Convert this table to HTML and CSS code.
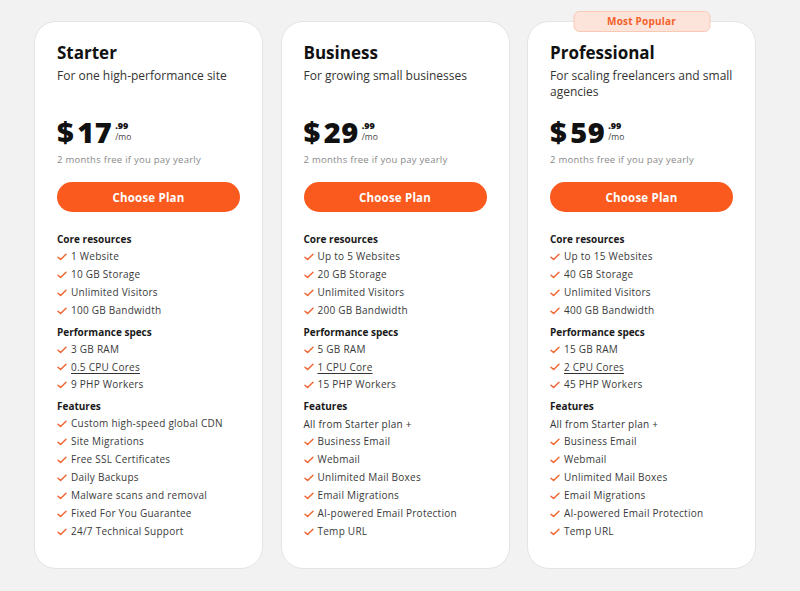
FILE: index.html
```html
<!DOCTYPE html>
<html>
<head>
<meta charset="utf-8">
<link rel="stylesheet" href="styles.css">
</head>
<body>
<div class="plans">
  <div class="card">
    <h2 class="title">Starter</h2>
    <p class="sub">For one high-performance site</p>
    <div class="price"><span class="amt"><span class="cur">$</span>17</span><span class="cents"><b>.99</b><i>/mo</i></span></div>
    <p class="yearly">2 months free if you pay yearly</p>
    <button class="btn">Choose Plan</button>
    <h3 class="sect first">Core resources</h3>
    <ul class="list">
      <li>1 Website</li>
      <li>10 GB Storage</li>
      <li>Unlimited Visitors</li>
      <li>100 GB Bandwidth</li>
    </ul>
    <h3 class="sect">Performance specs</h3>
    <ul class="list">
      <li>3 GB RAM</li>
      <li><span class="ul">0.5 CPU Cores</span></li>
      <li>9 PHP Workers</li>
    </ul>
    <h3 class="sect">Features</h3>
    <ul class="list">
      <li>Custom high-speed global CDN</li>
      <li>Site Migrations</li>
      <li>Free SSL Certificates</li>
      <li>Daily Backups</li>
      <li>Malware scans and removal</li>
      <li>Fixed For You Guarantee</li>
      <li>24/7 Technical Support</li>
    </ul>
  </div>
  <div class="card">
    <h2 class="title">Business</h2>
    <p class="sub">For growing small businesses</p>
    <div class="price"><span class="amt"><span class="cur">$</span>29</span><span class="cents"><b>.99</b><i>/mo</i></span></div>
    <p class="yearly">2 months free if you pay yearly</p>
    <button class="btn">Choose Plan</button>
    <h3 class="sect first">Core resources</h3>
    <ul class="list">
      <li>Up to 5 Websites</li>
      <li>20 GB Storage</li>
      <li>Unlimited Visitors</li>
      <li>200 GB Bandwidth</li>
    </ul>
    <h3 class="sect">Performance specs</h3>
    <ul class="list">
      <li>5 GB RAM</li>
      <li><span class="ul">1 CPU Core</span></li>
      <li>15 PHP Workers</li>
    </ul>
    <h3 class="sect">Features</h3>
    <p class="plain">All from Starter plan +</p>
    <ul class="list">
      <li>Business Email</li>
      <li>Webmail</li>
      <li>Unlimited Mail Boxes</li>
      <li>Email Migrations</li>
      <li>AI-powered Email Protection</li>
      <li>Temp URL</li>
    </ul>
  </div>
  <div class="card popular">
    <span class="badge">Most Popular</span>
    <h2 class="title">Professional</h2>
    <p class="sub">For scaling freelancers and small agencies</p>
    <div class="price"><span class="amt"><span class="cur">$</span>59</span><span class="cents"><b>.99</b><i>/mo</i></span></div>
    <p class="yearly">2 months free if you pay yearly</p>
    <button class="btn">Choose Plan</button>
    <h3 class="sect first">Core resources</h3>
    <ul class="list">
      <li>Up to 15 Websites</li>
      <li>40 GB Storage</li>
      <li>Unlimited Visitors</li>
      <li>400 GB Bandwidth</li>
    </ul>
    <h3 class="sect">Performance specs</h3>
    <ul class="list">
      <li>15 GB RAM</li>
      <li><span class="ul">2 CPU Cores</span></li>
      <li>45 PHP Workers</li>
    </ul>
    <h3 class="sect">Features</h3>
    <p class="plain">All from Starter plan +</p>
    <ul class="list">
      <li>Business Email</li>
      <li>Webmail</li>
      <li>Unlimited Mail Boxes</li>
      <li>Email Migrations</li>
      <li>AI-powered Email Protection</li>
      <li>Temp URL</li>
    </ul>
  </div>
</div>
</body>
</html>
```
FILE: styles.css
```css
* { box-sizing: border-box; }
html, body { margin: 0; padding: 0; }
body {
  background: #f2f2f2;
  font-family: "Open Sans", "DejaVu Sans", sans-serif;
  color: #222;
  width: 800px;
  height: 591px;
  overflow: hidden;
}
.plans {
  display: grid;
  grid-template-columns: 229px 229px 229px;
  column-gap: 17.5px;
  padding: 21px 0 0 34px;
}
.card {
  position: relative;
  background: #fff;
  border: 1px solid #e4e4e4;
  border-radius: 22px;
  padding: 19px 22px 30px 22px;
  height: 548px;
}
.badge {
  position: absolute;
  top: -11px;
  left: 50%;
  transform: translateX(-50%);
  width: 137px;
  height: 21px;
  line-height: 19px;
  text-align: center;
  background: #fde4da;
  border: 1px solid #f8c9b5;
  border-radius: 6px;
  color: #f2612b;
  font-size: 10px;
  font-weight: 700;
  letter-spacing: 0.2px;
}
.title {
  margin: 0;
  font-size: 17px;
  line-height: 24px;
  font-weight: 700;
  color: #111;
}
.sub {
  margin: 3px 0 0;
  font-size: 12px;
  line-height: 16px;
  min-height: 32px;
  color: #333;
}
.price {
  margin-top: 14px;
  display: flex;
  align-items: flex-start;
  height: 36px;
}
.amt {
  font-size: 29px;
  line-height: 36px;
  font-weight: 800;
  color: #111;
  letter-spacing: 0.5px;
}
.cur { margin-right: 3px; }
.cents {
  display: flex;
  flex-direction: column;
  margin: 7px 0 0 3px;
}
.cents b {
  font-size: 9px;
  line-height: 10px;
  font-weight: 800;
  color: #111;
}
.cents i {
  font-style: normal;
  font-size: 8.5px;
  line-height: 11px;
  color: #444;
}
.yearly {
  margin: 3px 0 0;
  font-size: 9.5px;
  line-height: 14px;
  color: #8a8a8a;
  letter-spacing: 0.25px;
}
.btn {
  display: block;
  width: 100%;
  margin-top: 15px;
  height: 30px;
  border: none;
  border-radius: 15px;
  background: #fb5a1e;
  color: #fff;
  font-family: inherit;
  font-size: 11.5px;
  font-weight: 700;
  letter-spacing: 0.2px;
}
.sect {
  margin: 3px 0 0;
  font-size: 10px;
  line-height: 18px;
  font-weight: 700;
  color: #1a1a1a;
}
.sect.first { margin-top: 18px; }
.plain {
  margin: 0;
  font-size: 10px;
  line-height: 18px;
  color: #333;
  letter-spacing: 0.25px;
}
.list {
  list-style: none;
  margin: 0;
  padding: 0;
}
.list li {
  display: flex;
  align-items: center;
  font-size: 10px;
  line-height: 17.9px;
  color: #3a3a3a;
  letter-spacing: 0.25px;
}
.list li::before {
  content: "";
  flex: none;
  width: 10px;
  height: 8px;
  margin-right: 4px;
  background: url("data:image/svg+xml;utf8,<svg xmlns='http://www.w3.org/2000/svg' viewBox='0 0 10 8'><path d='M1 4.2 L3.6 6.6 L9 1.2' fill='none' stroke='%23f0632e' stroke-width='1.4' stroke-linecap='round' stroke-linejoin='round'/></svg>") no-repeat center / contain;
}
.ul {
  text-decoration: underline;
  text-underline-offset: 2px;
  text-decoration-color: #333;
}
```
